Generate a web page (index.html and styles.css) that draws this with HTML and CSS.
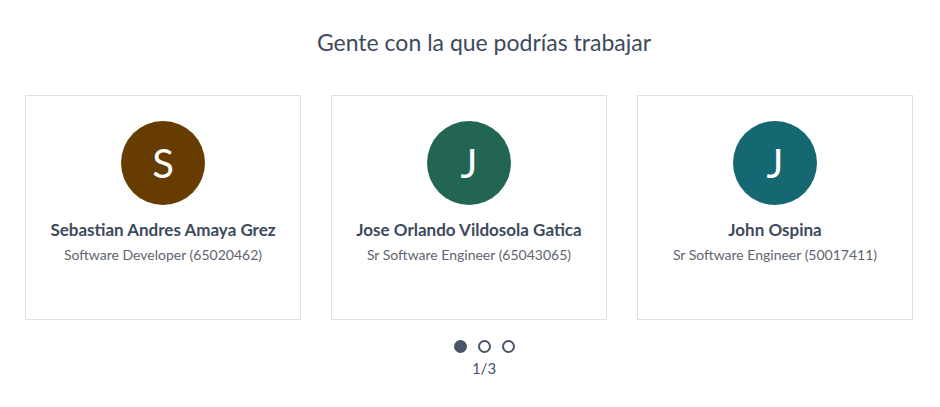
FILE: index.html
```html
<!DOCTYPE html>
<html lang="es">
<head>
<meta charset="utf-8">
<link rel="stylesheet" href="styles.css">
</head>
<body>
<section class="people">
  <h2 class="people-title">Gente con la que podrías trabajar</h2>
  <div class="cards">
    <div class="card">
      <div class="avatar avatar-brown">S</div>
      <div class="name">Sebastian Andres Amaya Grez</div>
      <div class="role">Software Developer (65020462)</div>
    </div>
    <div class="card">
      <div class="avatar avatar-green">J</div>
      <div class="name">Jose Orlando Vildosola Gatica</div>
      <div class="role">Sr Software Engineer (65043065)</div>
    </div>
    <div class="card">
      <div class="avatar avatar-teal">J</div>
      <div class="name">John Ospina</div>
      <div class="role">Sr Software Engineer (50017411)</div>
    </div>
  </div>
  <div class="pager">
    <div class="dots">
      <span class="dot dot-active"></span>
      <span class="dot"></span>
      <span class="dot"></span>
    </div>
    <div class="page-count">1/3</div>
  </div>
</section>
</body>
</html>
```
FILE: styles.css
```css
body {
  margin: 0;
  background: #ffffff;
  font-family: "Source Sans Pro", Lato, "Liberation Sans", sans-serif;
  color: #3d4a5c;
}
.people {
  padding: 27px 27px 0 25px;
}
.people-title {
  margin: 0;
  padding-left: 30px;
  text-align: center;
  font-weight: 400;
  font-size: 23px;
  line-height: 30px;
  color: #3d4a5c;
}
.cards {
  margin-top: 38px;
  display: grid;
  grid-template-columns: repeat(3, 276px);
  gap: 30px;
}
.card {
  height: 225px;
  box-sizing: border-box;
  border: 1px solid #e0e0e0;
  padding-top: 25px;
  display: flex;
  flex-direction: column;
  align-items: center;
}
.avatar {
  width: 84px;
  height: 84px;
  border-radius: 50%;
  color: #ffffff;
  font-size: 40px;
  display: flex;
  align-items: center;
  justify-content: center;
}
.avatar-brown { background: #663c00; }
.avatar-green { background: #236553; }
.avatar-teal { background: #156772; }
.name {
  margin-top: 14px;
  font-size: 17px;
  font-weight: 700;
  line-height: 21px;
  color: #3d4a5c;
}
.role {
  margin-top: 6px;
  font-size: 14px;
  line-height: 18px;
  color: #5f6570;
}
.pager {
  margin-top: 20px;
  padding-left: 30px;
  display: flex;
  flex-direction: column;
  align-items: center;
}
.dots {
  display: flex;
  gap: 11px;
}
.dot {
  width: 13px;
  height: 13px;
  box-sizing: border-box;
  border-radius: 50%;
  border: 2px solid #4a5467;
}
.dot-active {
  background: #4a5467;
}
.page-count {
  margin-top: 6px;
  font-size: 15px;
  line-height: 18px;
  color: #4a5467;
}
```
